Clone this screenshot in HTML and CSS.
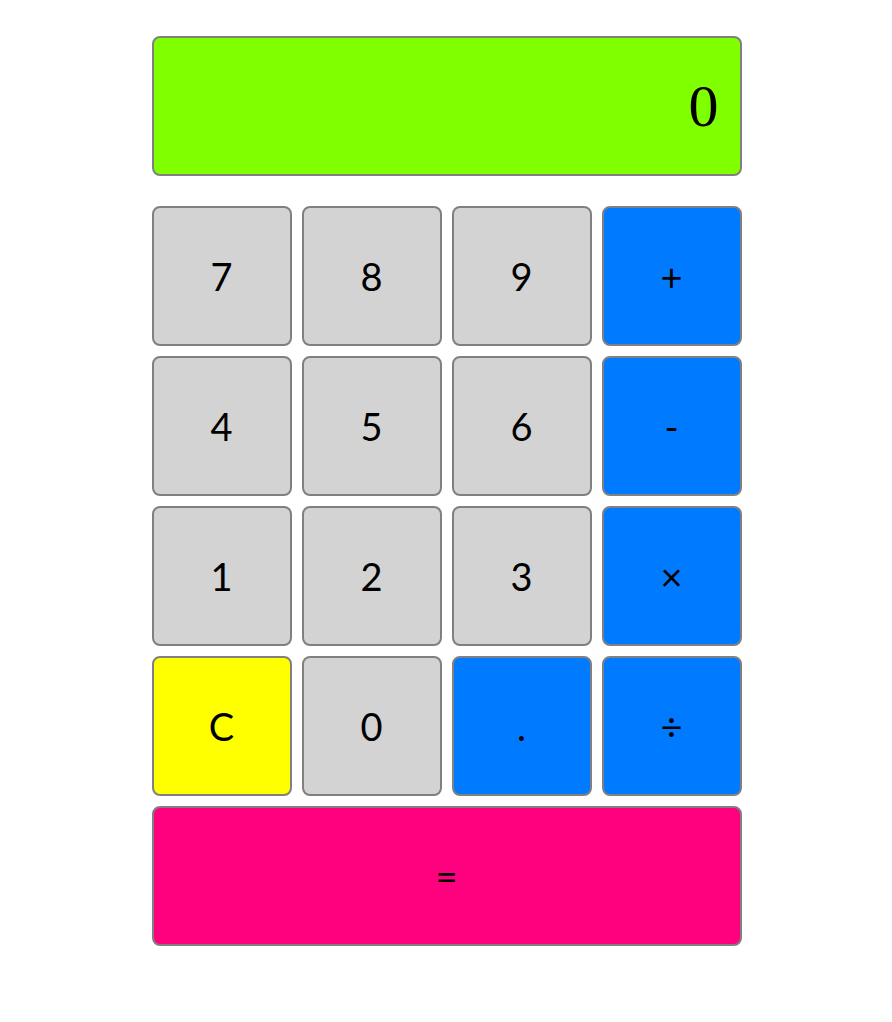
FILE: index.html
```html
<!DOCTYPE html>
<html>
<head>
<meta charset="utf-8">
<link rel="stylesheet" href="styles.css">
</head>
<body>
<div class="calc">
  <div class="display">0</div>
  <div class="keys">
    <button class="key num">7</button>
    <button class="key num">8</button>
    <button class="key num">9</button>
    <button class="key op">+</button>
    <button class="key num">4</button>
    <button class="key num">5</button>
    <button class="key num">6</button>
    <button class="key op">-</button>
    <button class="key num">1</button>
    <button class="key num">2</button>
    <button class="key num">3</button>
    <button class="key op">×</button>
    <button class="key clear">C</button>
    <button class="key num">0</button>
    <button class="key op">.</button>
    <button class="key op">÷</button>
    <button class="key equals">=</button>
  </div>
</div>
</body>
</html>
```
FILE: styles.css
```css
html, body {
  margin: 0;
  padding: 0;
  background: #ffffff;
}
body {
  padding: 36px 0 0 1px;
}
.calc {
  width: 590px;
  margin: 0 auto;
  display: flex;
  flex-direction: column;
  gap: 30px;
}
.display {
  box-sizing: border-box;
  height: 140px;
  background: #7fff00;
  border: 2px solid #808080;
  border-radius: 8px;
  display: flex;
  align-items: center;
  justify-content: flex-end;
  padding-right: 21px;
  font-family: "Liberation Serif", "Times New Roman", serif;
  font-size: 60px;
  color: #000;
}
.keys {
  display: grid;
  grid-template-columns: repeat(4, 140px);
  grid-auto-rows: 140px;
  gap: 10px;
}
.key {
  box-sizing: border-box;
  margin: 0;
  padding: 0;
  border: 2px solid #808080;
  border-radius: 8px;
  font-family: "Lato", "Noto Sans", sans-serif;
  font-size: 38px;
  color: #000;
  display: flex;
  align-items: center;
  justify-content: center;
}
.num { background: #d3d3d3; }
.op { background: #007bff; }
.clear { background: #ffff00; }
.equals {
  grid-column: 1 / -1;
  background: #ff007f;
}
```
